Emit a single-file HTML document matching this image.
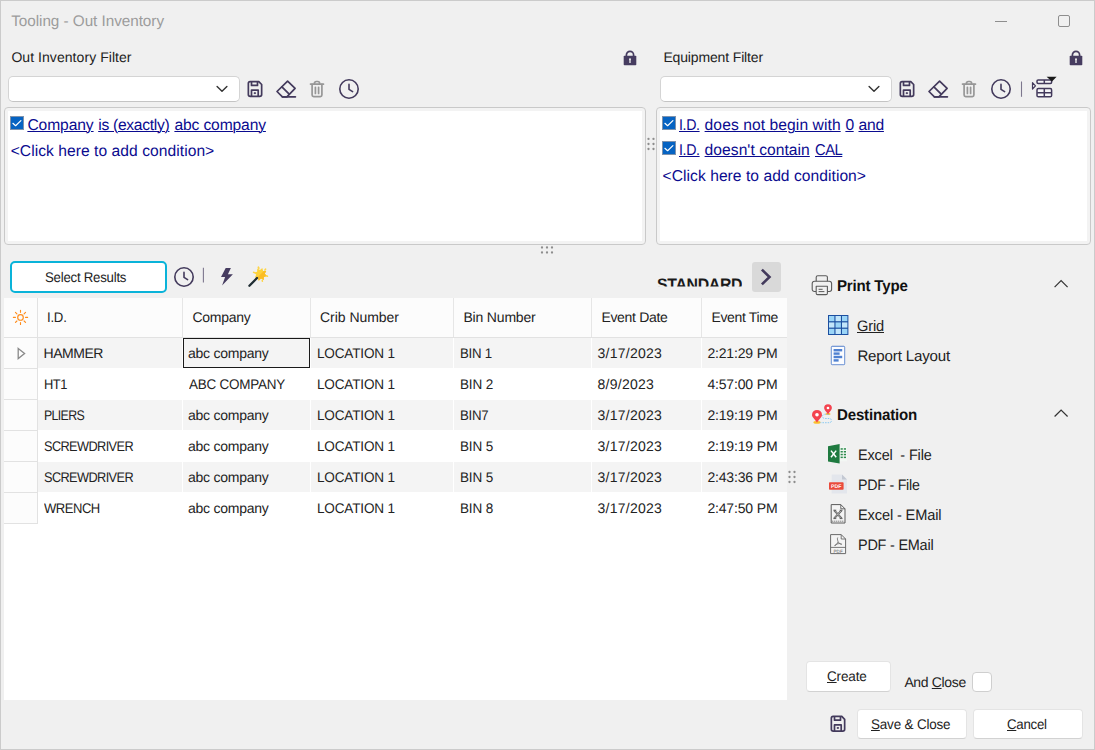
<!DOCTYPE html>
<html><head><meta charset="utf-8"><title>Tooling - Out Inventory</title>
<style>
html,body{margin:0;padding:0;}
body{width:1095px;height:750px;overflow:hidden;background:#f0f0f0;font-family:"Liberation Sans",sans-serif;font-size:14px;color:#222;position:relative;text-rendering:geometricPrecision;}
.abs{position:absolute;}
#win{position:absolute;left:0;top:0;width:1093px;height:748px;border:1px solid #cbcbcb;background:#f0f0f0;}
.t{position:absolute;white-space:pre;line-height:20px;}
.t u{text-decoration-thickness:1px;text-underline-offset:1px;}
.combo{position:absolute;height:24px;width:230px;background:#fff;border:1px solid #d4d4d4;border-bottom-color:#c4c4c4;border-radius:5px;}
.panel{position:absolute;background:#fff;border:1px solid #c9c9c9;border-radius:4px;box-shadow:inset 0 0 0 3px #f3f3f3;box-sizing:border-box;}
.cb{position:absolute;width:14px;height:14px;background:#0663c2;box-sizing:border-box;border:1px solid #7f93ad;}
.btn{position:absolute;background:#fff;border:1px solid #e4e4e4;border-bottom-color:#d2d2d2;border-radius:4px;box-sizing:border-box;}
.dot{position:absolute;width:2px;height:2px;background:#a8a8a8;border-radius:1px;}
#grid{position:absolute;left:4px;top:298px;width:783px;height:402px;background:#fff;}
.hdr{position:absolute;left:0;top:0;width:783px;height:39px;background:#fcfcfc;border-bottom:1px solid #e2e2e2;}
.vl{position:absolute;width:1px;}
.row{position:absolute;left:34px;width:749px;height:30px;}
.ind{position:absolute;left:0;width:33px;height:30px;background:#fcfcfc;border-right:1px solid #e2e2e2;border-bottom:1px solid #e2e2e2;}
svg{position:absolute;left:0;top:0;overflow:visible;}
</style></head><body>
<div id="win"></div>
<!-- window buttons -->
<div class="abs" style="left:995px;top:21px;width:12px;height:1px;background:#8e8e8e;"></div>
<div class="abs" style="left:1058px;top:15px;width:10px;height:10px;border:1px solid #8e8e8e;border-radius:2px;"></div>

<div class="combo" style="left:8px;top:76px;"></div>
<div class="combo" style="left:660px;top:76px;"></div>

<div class="panel" style="left:4px;top:107px;width:642px;height:138px;"></div>
<div class="panel" style="left:656px;top:107px;width:435px;height:138px;"></div>

<!-- condition checkboxes -->
<div class="cb" style="left:10px;top:116px;"></div>
<div class="cb" style="left:662px;top:116px;"></div>
<div class="cb" style="left:662px;top:141px;"></div>


<!-- Select results button -->
<div class="abs" style="left:10px;top:261px;width:157px;height:32px;box-sizing:border-box;border:2px solid #0ab3d9;border-radius:5px;background:#fff;"></div>
<div class="abs" style="left:752px;top:262px;width:29px;height:30px;background:#d9d9d9;border-radius:3px;"></div>

<!-- grid -->
<div id="grid">
  <div class="hdr"></div>
  <div class="row" style="top:40px;background:#f4f4f4;"></div>
  <div class="row" style="top:102px;background:#f4f4f4;"></div>
  <div class="row" style="top:164px;background:#f4f4f4;"></div>
  <div class="ind" style="top:40px;"></div>
  <div class="ind" style="top:71px;"></div>
  <div class="ind" style="top:102px;"></div>
  <div class="ind" style="top:133px;"></div>
  <div class="ind" style="top:164px;"></div>
  <div class="ind" style="top:195px;"></div>
  <!-- header dividers -->
  <div class="vl" style="left:33px;top:0;height:39px;background:#e2e2e2;"></div>
  <div class="vl" style="left:178px;top:0;height:39px;background:#e6e6e6;"></div>
  <div class="vl" style="left:306px;top:0;height:39px;background:#e6e6e6;"></div>
  <div class="vl" style="left:449px;top:0;height:39px;background:#e6e6e6;"></div>
  <div class="vl" style="left:587px;top:0;height:39px;background:#e6e6e6;"></div>
  <div class="vl" style="left:697px;top:0;height:39px;background:#e6e6e6;"></div>
  <!-- body dividers (white) -->
  <div class="vl" style="left:178px;top:40px;height:186px;background:#fff;"></div>
  <div class="vl" style="left:306px;top:40px;height:186px;background:#fff;"></div>
  <div class="vl" style="left:449px;top:40px;height:186px;background:#fff;"></div>
  <div class="vl" style="left:587px;top:40px;height:186px;background:#fff;"></div>
  <div class="vl" style="left:697px;top:40px;height:186px;background:#fff;"></div>
  <!-- focused cell -->
  <div class="abs" style="left:179px;top:40px;width:127px;height:30px;box-sizing:border-box;border:1px solid #1a1a1a;background:#f4f4f4;"></div>
</div>

<!-- buttons -->
<div class="btn" style="left:806px;top:661px;width:85px;height:31px;"></div>
<div class="btn" style="left:857px;top:709px;width:110px;height:30px;"></div>
<div class="btn" style="left:973px;top:709px;width:110px;height:30px;"></div>
<div class="abs" style="left:972px;top:672px;width:20px;height:20px;box-sizing:border-box;background:#fff;border:1px solid #cfcfcf;border-radius:4px;"></div>

<div class="t" style="left:11.2px;top:12px;font-size:15.3px;letter-spacing:-0.048px;color:#9c9c9c;">Tooling - Out Inventory</div>
<div class="t" style="left:11.4px;top:47px;font-size:14.0px;letter-spacing:0.058px;color:#222;">Out Inventory Filter</div>
<div class="t" style="left:663.4px;top:47px;font-size:14.0px;letter-spacing:-0.146px;color:#222;">Equipment Filter</div>
<div class="t" style="left:27.4px;top:116px;font-size:15.64px;letter-spacing:-0.096px;color:#0b0b8f;"><u>Company</u></div>
<div class="t" style="left:98.2px;top:116px;font-size:15.64px;letter-spacing:-0.281px;color:#0b0b8f;"><u>is (exactly)</u></div>
<div class="t" style="left:174.4px;top:116px;font-size:15.64px;letter-spacing:-0.131px;color:#0b0b8f;"><u>abc company</u></div>
<div class="t" style="left:10.7px;top:142px;font-size:15.64px;letter-spacing:0.042px;color:#0b0b8f;">&lt;Click here to add condition&gt;</div>
<div class="t" style="left:679.2px;top:116px;font-size:15.64px;letter-spacing:-0.406px;color:#0b0b8f;transform:scaleX(0.908);transform-origin:0 0;"><u>I.D.</u></div>
<div class="t" style="left:704.6px;top:116px;font-size:15.64px;letter-spacing:0.076px;color:#0b0b8f;"><u>does not begin with</u></div>
<div class="t" style="left:845.4px;top:116px;font-size:15.64px;letter-spacing:-0.403px;color:#0b0b8f;"><u>0</u></div>
<div class="t" style="left:858.5px;top:116px;font-size:15.64px;letter-spacing:-0.226px;color:#0b0b8f;"><u>and</u></div>
<div class="t" style="left:679.2px;top:141px;font-size:15.64px;letter-spacing:-0.406px;color:#0b0b8f;transform:scaleX(0.908);transform-origin:0 0;"><u>I.D.</u></div>
<div class="t" style="left:704.6px;top:141px;font-size:15.64px;letter-spacing:0.038px;color:#0b0b8f;"><u>doesn&#x27;t contain</u></div>
<div class="t" style="left:814.6px;top:141px;font-size:15.64px;letter-spacing:-0.444px;color:#0b0b8f;transform:scaleX(0.939);transform-origin:0 0;"><u>CAL</u></div>
<div class="t" style="left:662.6px;top:167px;font-size:15.64px;letter-spacing:0.035px;color:#0b0b8f;">&lt;Click here to add condition&gt;</div>
<div class="t" style="left:45.4px;top:267px;font-size:14.0px;letter-spacing:-0.248px;color:#222;transform:scaleX(0.944);transform-origin:0 0;">Select Results</div>
<div class="t" style="left:656.6px;top:275px;font-size:16.6px;letter-spacing:-0.344px;color:#1a1a1a;transform:scaleX(0.956);transform-origin:0 0;font-weight:bold;clip-path:inset(0 0 8.4px 0);">STANDARD</div>
<div class="t" style="left:47.4px;top:307px;font-size:14.0px;letter-spacing:-0.233px;color:#222;transform:scaleX(0.94);transform-origin:0 0;">I.D.</div>
<div class="t" style="left:192.4px;top:307px;font-size:14.0px;letter-spacing:-0.246px;color:#222;">Company</div>
<div class="t" style="left:320.0px;top:307px;font-size:14.0px;letter-spacing:-0.033px;color:#222;">Crib Number</div>
<div class="t" style="left:463.4px;top:307px;font-size:14.0px;letter-spacing:-0.172px;color:#222;">Bin Number</div>
<div class="t" style="left:601.4px;top:307px;font-size:14.0px;letter-spacing:-0.307px;color:#222;">Event Date</div>
<div class="t" style="left:711.4px;top:307px;font-size:14.0px;letter-spacing:-0.343px;color:#222;">Event Time</div>
<div class="t" style="left:43.6px;top:343px;font-size:14.0px;letter-spacing:-0.472px;color:#222;">HAMMER</div>
<div class="t" style="left:188.0px;top:343px;font-size:14.0px;letter-spacing:-0.244px;color:#222;">abc company</div>
<div class="t" style="left:316.6px;top:343px;font-size:14.0px;letter-spacing:-0.183px;color:#222;transform:scaleX(0.968);transform-origin:0 0;">LOCATION 1</div>
<div class="t" style="left:459.6px;top:343px;font-size:14.0px;letter-spacing:-0.273px;color:#222;transform:scaleX(0.945);transform-origin:0 0;">BIN 1</div>
<div class="t" style="left:597.6px;top:343px;font-size:14.0px;letter-spacing:0.234px;color:#222;">3/17/2023</div>
<div class="t" style="left:707.4px;top:343px;font-size:14.0px;letter-spacing:-0.161px;color:#222;">2:21:29 PM</div>
<div class="t" style="left:43.6px;top:374px;font-size:14.0px;letter-spacing:-0.512px;color:#222;transform:scaleX(0.919);transform-origin:0 0;">HT1</div>
<div class="t" style="left:189.0px;top:374px;font-size:14.0px;letter-spacing:-0.240px;color:#222;transform:scaleX(0.962);transform-origin:0 0;">ABC COMPANY</div>
<div class="t" style="left:316.6px;top:374px;font-size:14.0px;letter-spacing:-0.183px;color:#222;transform:scaleX(0.968);transform-origin:0 0;">LOCATION 1</div>
<div class="t" style="left:459.6px;top:374px;font-size:14.0px;letter-spacing:-0.164px;color:#222;transform:scaleX(0.965);transform-origin:0 0;">BIN 2</div>
<div class="t" style="left:597.6px;top:374px;font-size:14.0px;letter-spacing:0.237px;color:#222;">8/9/2023</div>
<div class="t" style="left:707.4px;top:374px;font-size:14.0px;letter-spacing:-0.161px;color:#222;">4:57:00 PM</div>
<div class="t" style="left:43.6px;top:405px;font-size:14.0px;letter-spacing:-0.744px;color:#222;transform:scaleX(0.882);transform-origin:0 0;">PLIERS</div>
<div class="t" style="left:188.0px;top:405px;font-size:14.0px;letter-spacing:-0.244px;color:#222;">abc company</div>
<div class="t" style="left:316.6px;top:405px;font-size:14.0px;letter-spacing:-0.183px;color:#222;transform:scaleX(0.968);transform-origin:0 0;">LOCATION 1</div>
<div class="t" style="left:459.6px;top:405px;font-size:14.0px;letter-spacing:-0.284px;color:#222;transform:scaleX(0.947);transform-origin:0 0;">BIN7</div>
<div class="t" style="left:597.6px;top:405px;font-size:14.0px;letter-spacing:0.234px;color:#222;">3/17/2023</div>
<div class="t" style="left:707.4px;top:405px;font-size:14.0px;letter-spacing:-0.161px;color:#222;">2:19:19 PM</div>
<div class="t" style="left:43.6px;top:436px;font-size:14.0px;letter-spacing:-0.636px;color:#222;transform:scaleX(0.908);transform-origin:0 0;">SCREWDRIVER</div>
<div class="t" style="left:188.0px;top:436px;font-size:14.0px;letter-spacing:-0.244px;color:#222;">abc company</div>
<div class="t" style="left:316.6px;top:436px;font-size:14.0px;letter-spacing:-0.183px;color:#222;transform:scaleX(0.968);transform-origin:0 0;">LOCATION 1</div>
<div class="t" style="left:459.6px;top:436px;font-size:14.0px;letter-spacing:-0.164px;color:#222;transform:scaleX(0.965);transform-origin:0 0;">BIN 5</div>
<div class="t" style="left:597.6px;top:436px;font-size:14.0px;letter-spacing:0.234px;color:#222;">3/17/2023</div>
<div class="t" style="left:707.4px;top:436px;font-size:14.0px;letter-spacing:-0.161px;color:#222;">2:19:19 PM</div>
<div class="t" style="left:43.6px;top:467px;font-size:14.0px;letter-spacing:-0.636px;color:#222;transform:scaleX(0.908);transform-origin:0 0;">SCREWDRIVER</div>
<div class="t" style="left:188.0px;top:467px;font-size:14.0px;letter-spacing:-0.244px;color:#222;">abc company</div>
<div class="t" style="left:316.6px;top:467px;font-size:14.0px;letter-spacing:-0.183px;color:#222;transform:scaleX(0.968);transform-origin:0 0;">LOCATION 1</div>
<div class="t" style="left:459.6px;top:467px;font-size:14.0px;letter-spacing:-0.164px;color:#222;transform:scaleX(0.965);transform-origin:0 0;">BIN 5</div>
<div class="t" style="left:597.6px;top:467px;font-size:14.0px;letter-spacing:0.234px;color:#222;">3/17/2023</div>
<div class="t" style="left:707.4px;top:467px;font-size:14.0px;letter-spacing:-0.161px;color:#222;">2:43:36 PM</div>
<div class="t" style="left:43.6px;top:498px;font-size:14.0px;letter-spacing:-0.511px;color:#222;transform:scaleX(0.931);transform-origin:0 0;">WRENCH</div>
<div class="t" style="left:188.0px;top:498px;font-size:14.0px;letter-spacing:-0.244px;color:#222;">abc company</div>
<div class="t" style="left:316.6px;top:498px;font-size:14.0px;letter-spacing:-0.183px;color:#222;transform:scaleX(0.968);transform-origin:0 0;">LOCATION 1</div>
<div class="t" style="left:459.6px;top:498px;font-size:14.0px;letter-spacing:-0.164px;color:#222;transform:scaleX(0.965);transform-origin:0 0;">BIN 8</div>
<div class="t" style="left:597.6px;top:498px;font-size:14.0px;letter-spacing:0.234px;color:#222;">3/17/2023</div>
<div class="t" style="left:707.4px;top:498px;font-size:14.0px;letter-spacing:-0.161px;color:#222;">2:47:50 PM</div>
<div class="t" style="left:837.4px;top:277px;font-size:15.7px;letter-spacing:-0.208px;color:#111;transform:scaleX(0.961);transform-origin:0 0;font-weight:bold;">Print Type</div>
<div class="t" style="left:857.4px;top:317px;font-size:15.1px;letter-spacing:-0.156px;color:#222;transform:scaleX(0.968);transform-origin:0 0;"><u>Grid</u></div>
<div class="t" style="left:857.4px;top:347px;font-size:15.1px;letter-spacing:-0.171px;color:#222;">Report Layout</div>
<div class="t" style="left:837.4px;top:406px;font-size:15.7px;letter-spacing:-0.206px;color:#111;transform:scaleX(0.962);transform-origin:0 0;font-weight:bold;">Destination</div>
<div class="t" style="left:858.0px;top:446px;font-size:15.1px;letter-spacing:-0.167px;color:#222;transform:scaleX(0.96);transform-origin:0 0;">Excel  - File</div>
<div class="t" style="left:858.0px;top:476px;font-size:15.1px;letter-spacing:-0.267px;color:#222;transform:scaleX(0.944);transform-origin:0 0;">PDF - File</div>
<div class="t" style="left:858.0px;top:506px;font-size:15.1px;letter-spacing:-0.148px;color:#222;transform:scaleX(0.968);transform-origin:0 0;">Excel - EMail</div>
<div class="t" style="left:858.0px;top:536px;font-size:15.1px;letter-spacing:-0.225px;color:#222;transform:scaleX(0.956);transform-origin:0 0;">PDF - EMail</div>
<div class="t" style="left:827.4px;top:666px;font-size:14.0px;letter-spacing:-0.166px;color:#222;transform:scaleX(0.965);transform-origin:0 0;"><u>C</u>reate</div>
<div class="t" style="left:904.4px;top:672px;font-size:14.0px;letter-spacing:-0.355px;color:#222;">And <u>C</u>lose</div>
<div class="t" style="left:871.0px;top:714px;font-size:14.0px;letter-spacing:-0.191px;color:#222;transform:scaleX(0.962);transform-origin:0 0;"><u>S</u>ave &amp; Close</div>
<div class="t" style="left:1007.0px;top:714px;font-size:14.0px;letter-spacing:-0.271px;color:#222;transform:scaleX(0.946);transform-origin:0 0;"><u>C</u>ancel</div>

<svg width="1095" height="750" viewBox="0 0 1095 750">
<g transform="translate(247.5,80.8)" fill="none" stroke="#433a5c" stroke-width="1.7" stroke-linejoin="round">
<path d="M2.6 0.85 H11.3 L14.15 3.7 V13.6 a1.9 1.9 0 0 1 -1.9 1.9 H2.75 a1.9 1.9 0 0 1 -1.9 -1.9 V2.6 a1.75 1.75 0 0 1 1.75 -1.75 Z"/>
<path d="M4 1 V4.6 H10 V1"/>
<path d="M4 15.3 V9.3 H10.7 V15.3"/>
<rect x="6.6" y="11.9" width="1.5" height="0.9" fill="#433a5c" stroke-width="0.8"/>
</g>
<g transform="translate(276.1,80.2)" fill="none" stroke="#433a5c" stroke-width="1.7" stroke-linejoin="round" stroke-linecap="round">
<path d="M11.5 0.9 L19 8.2 L10.8 16.6 H6.3 L0.9 11.3 Z"/>
<path d="M5.8 6.6 L12.6 13.4"/>
<path d="M6.3 16.6 H19.3"/>
</g>
<g transform="translate(309.8,80.7)" fill="none" stroke="#979797" stroke-width="1.7" stroke-linecap="round" stroke-linejoin="round">
<path d="M0.7 3.4 H13.7"/>
<path d="M4.6 3.2 V2.6 a1.8 1.8 0 0 1 1.8 -1.8 h1.6 a1.8 1.8 0 0 1 1.8 1.8 V3.2"/>
<path d="M2.3 3.6 V14.3 a1.6 1.6 0 0 0 1.6 1.6 H10.5 a1.6 1.6 0 0 0 1.6 -1.6 V3.6"/>
<path d="M5.6 6.6 V12.8 M8.8 6.6 V12.8"/>
</g>
<g fill="none" stroke="#433a5c" stroke-width="1.6" stroke-linecap="round" stroke-linejoin="round">
<circle cx="349" cy="89" r="9.2"/>
<path d="M349 84.4 V89.3 L352.6 91.6"/>
</g>
<g transform="translate(899.5,80.8)" fill="none" stroke="#433a5c" stroke-width="1.7" stroke-linejoin="round">
<path d="M2.6 0.85 H11.3 L14.15 3.7 V13.6 a1.9 1.9 0 0 1 -1.9 1.9 H2.75 a1.9 1.9 0 0 1 -1.9 -1.9 V2.6 a1.75 1.75 0 0 1 1.75 -1.75 Z"/>
<path d="M4 1 V4.6 H10 V1"/>
<path d="M4 15.3 V9.3 H10.7 V15.3"/>
<rect x="6.6" y="11.9" width="1.5" height="0.9" fill="#433a5c" stroke-width="0.8"/>
</g>
<g transform="translate(928.1,80.2)" fill="none" stroke="#433a5c" stroke-width="1.7" stroke-linejoin="round" stroke-linecap="round">
<path d="M11.5 0.9 L19 8.2 L10.8 16.6 H6.3 L0.9 11.3 Z"/>
<path d="M5.8 6.6 L12.6 13.4"/>
<path d="M6.3 16.6 H19.3"/>
</g>
<g transform="translate(961.8,80.7)" fill="none" stroke="#979797" stroke-width="1.7" stroke-linecap="round" stroke-linejoin="round">
<path d="M0.7 3.4 H13.7"/>
<path d="M4.6 3.2 V2.6 a1.8 1.8 0 0 1 1.8 -1.8 h1.6 a1.8 1.8 0 0 1 1.8 1.8 V3.2"/>
<path d="M2.3 3.6 V14.3 a1.6 1.6 0 0 0 1.6 1.6 H10.5 a1.6 1.6 0 0 0 1.6 -1.6 V3.6"/>
<path d="M5.6 6.6 V12.8 M8.8 6.6 V12.8"/>
</g>
<g fill="none" stroke="#433a5c" stroke-width="1.6" stroke-linecap="round" stroke-linejoin="round">
<circle cx="1001" cy="89" r="9.2"/>
<path d="M1001 84.4 V89.3 L1004.6 91.6"/>
</g>
<path d="M1021.5 81.5 V96.8" stroke="#7d778e" stroke-width="1.1"/>
<g fill="#f6f6f8" stroke="#433a5c" stroke-width="1.5" stroke-linejoin="round">
<rect x="1037" y="79.9" width="14.6" height="3.6" rx="1.2"/>
<path d="M1044.3 80 V83.4" />
<rect x="1037" y="88.6" width="14.6" height="8.2" rx="1.4"/>
<path d="M1044.3 88.8 V96.6 M1037.2 92.7 H1051.4"/>
<path d="M1032.5 82.6 L1035.5 85.8 L1032.5 89 Z" fill="none" stroke-width="1.2"/>
</g>
<path d="M1046.6 76.8 H1056.6 L1052 81.6 Z" fill="#1a1a1a"/>
<g transform="translate(623.7,50.5)">
<path d="M2.7 5.6 V4.4 a3.6 3.6 0 0 1 7.2 0 V5.6" fill="none" stroke="#463c60" stroke-width="1.7"/>
<rect x="0" y="5.2" width="12.6" height="9.6" rx="0.8" fill="#463c60"/>
<circle cx="6.3" cy="8.7" r="1" fill="#f0f0f0"/>
<rect x="5.65" y="9.2" width="1.3" height="3.3" fill="#f0f0f0"/>
</g>
<g transform="translate(1069.7,50.5)">
<path d="M2.7 5.6 V4.4 a3.6 3.6 0 0 1 7.2 0 V5.6" fill="none" stroke="#463c60" stroke-width="1.7"/>
<rect x="0" y="5.2" width="12.6" height="9.6" rx="0.8" fill="#463c60"/>
<circle cx="6.3" cy="8.7" r="1" fill="#f0f0f0"/>
<rect x="5.65" y="9.2" width="1.3" height="3.3" fill="#f0f0f0"/>
</g>
<path d="M217.1 86.4 l4.9 4.9 l4.9 -4.9" fill="none" stroke="#333" stroke-width="1.4" stroke-linecap="round" stroke-linejoin="round"/>
<path d="M869.1 86.4 l4.9 4.9 l4.9 -4.9" fill="none" stroke="#333" stroke-width="1.4" stroke-linecap="round" stroke-linejoin="round"/>
<path d="M12.9 123.3 L15.6 125.7 L20.9 120.6" fill="none" stroke="#fff" stroke-width="1.2" stroke-linecap="round" stroke-linejoin="round"/>
<path d="M664.9 123.3 L667.6 125.7 L672.9 120.6" fill="none" stroke="#fff" stroke-width="1.2" stroke-linecap="round" stroke-linejoin="round"/>
<path d="M664.9 148.3 L667.6 150.7 L672.9 145.6" fill="none" stroke="#fff" stroke-width="1.2" stroke-linecap="round" stroke-linejoin="round"/>
<g fill="none" stroke="#433a5c" stroke-width="1.6" stroke-linecap="round" stroke-linejoin="round">
<circle cx="184" cy="277" r="9.2"/>
<path d="M184 272.4 V277.3 L187.6 279.6"/>
</g>
<path d="M203.4 267.8 V282.4" stroke="#7d778e" stroke-width="1.1"/>
<path d="M225.7 268 H230.9 L227.9 274.2 H232.9 L222.1 285.4 L225.1 276.9 H221 Z" fill="#463c60"/>
<polygon points="262.3,267.9 263.1,270.9 266.2,271.1 264.8,273.8 266.9,276.1 263.9,276.9 263.7,280.0 261.0,278.6 258.7,280.7 257.9,277.7 254.8,277.5 256.2,274.8 254.1,272.5 257.1,271.7 257.3,268.6 260.0,270.0" fill="#fdd23b"/>
<clipPath id="wc"><path d="M252.5 282.3 L268.5 266.3 L270.5 284.3 Z"/></clipPath>
<polygon points="262.3,267.9 263.1,270.9 266.2,271.1 264.8,273.8 266.9,276.1 263.9,276.9 263.7,280.0 261.0,278.6 258.7,280.7 257.9,277.7 254.8,277.5 256.2,274.8 254.1,272.5 257.1,271.7 257.3,268.6 260.0,270.0" fill="#fbbd25" clip-path="url(#wc)"/>
<path d="M249.4 285.7 L257.0 278.0" stroke="#1f2d33" stroke-width="2.3" stroke-linecap="round"/>
<g fill="#fdd445"><ellipse cx="258.6" cy="267.7" rx="0.9" ry="1.4" transform="rotate(-30 258.6 267.7)"/><ellipse cx="265.3" cy="269.6" rx="0.9" ry="1.4" transform="rotate(35 265.3 269.6)"/><ellipse cx="254.1" cy="272.5" rx="1.4" ry="0.8" transform="rotate(20 254.1 272.5)"/><ellipse cx="267" cy="276" rx="1.4" ry="0.8" transform="rotate(35 267 276)"/><ellipse cx="262.3" cy="280.8" rx="0.8" ry="1.3" transform="rotate(-10 262.3 280.8)"/></g>
<path d="M761.9 269.6 L769.5 277 L761.9 284.4" fill="none" stroke="#433a5c" stroke-width="2.6" stroke-linecap="butt" stroke-linejoin="miter"/>
<g fill="none" stroke="#ff8c1a" stroke-width="1.15" stroke-linecap="round"><circle cx="20.5" cy="317.4" r="2.8"/><path d="M25.60 317.40 L27.60 317.40 M24.11 321.01 L25.52 322.42 M20.50 322.50 L20.50 324.50 M16.89 321.01 L15.48 322.42 M15.40 317.40 L13.40 317.40 M16.89 313.79 L15.48 312.38 M20.50 312.30 L20.50 310.30 M24.11 313.79 L25.52 312.38 "/></g>
<path d="M18.2 348.4 L24.6 353.5 L18.2 358.6 Z" fill="none" stroke="#8a8a8a" stroke-width="1.3" stroke-linejoin="miter"/>
<path d="M1054.6 287.2 l6.5 -6.5 l6.5 6.5" fill="none" stroke="#333" stroke-width="1.2" stroke-linecap="butt" stroke-linejoin="miter"/>
<path d="M1054.6 416.5 l6.5 -6.5 l6.5 6.5" fill="none" stroke="#333" stroke-width="1.2" stroke-linecap="butt" stroke-linejoin="miter"/>
<g fill="none" stroke="#5a5a5a" stroke-width="1.1" stroke-linejoin="round">
<path d="M816.2 281.2 V277.3 a1.6 1.6 0 0 1 1.6 -1.6 H825.8 a1.6 1.6 0 0 1 1.6 1.6 V281.2"/>
<path d="M816.2 291.5 H814.4 a2.2 2.2 0 0 1 -2.2 -2.2 V283.6 a2.4 2.4 0 0 1 2.4 -2.4 H829.2 a2.4 2.4 0 0 1 2.4 2.4 V289.3 a2.2 2.2 0 0 1 -2.2 2.2 H827.4"/>
<path d="M816.2 286.3 H827.4 V293.2 a1.4 1.4 0 0 1 -1.4 1.4 H817.6 a1.4 1.4 0 0 1 -1.4 -1.4 Z" fill="#f0f0f0"/>
<path d="M818.6 289.3 H822.6 M818.6 291.6 H824.4" stroke-width="1"/>
</g>
<rect x="828" y="315" width="20.4" height="20" fill="#1c4fa0"/><rect x="829.0" y="316.0" width="5.4" height="5.2" fill="#9bd5f7"/><rect x="835.5" y="316.0" width="5.4" height="5.2" fill="#c2e6fb"/><rect x="842.0" y="316.0" width="5.4" height="5.2" fill="#9bd5f7"/><rect x="829.0" y="322.4" width="5.4" height="5.2" fill="#c2e6fb"/><rect x="835.5" y="322.4" width="5.4" height="5.2" fill="#9bd5f7"/><rect x="842.0" y="322.4" width="5.4" height="5.2" fill="#c2e6fb"/><rect x="829.0" y="328.8" width="5.4" height="5.2" fill="#9bd5f7"/><rect x="835.5" y="328.8" width="5.4" height="5.2" fill="#c2e6fb"/><rect x="842.0" y="328.8" width="5.4" height="5.2" fill="#9bd5f7"/>
<rect x="831.3" y="346.3" width="13.4" height="18.4" rx="0.8" fill="#fbfcff" stroke="#5b86cf" stroke-width="0.9"/>
<path d="M833 345.8 V347 M835 345.8 V347 M837 345.8 V347 M839 345.8 V347 M841 345.8 V347 M843 345.8 V347" stroke="#5b86cf" stroke-width="0.7"/>
<g fill="#4f81d1"><rect x="833.6" y="349" width="8.6" height="2.4"/><rect x="833.6" y="352.4" width="6" height="2.4"/><rect x="833.6" y="355.8" width="8.6" height="2.4"/><rect x="833.6" y="359.2" width="5" height="2.4"/></g>
<ellipse cx="817" cy="422.4" rx="3.6" ry="1.3" fill="#fbc02d"/>
<ellipse cx="828" cy="414" rx="2.6" ry="1" fill="#fbc02d"/>
<path d="M828.5 414.3 H824.6 a2.1 2.1 0 0 0 0 4.2 H829.4 a2.1 2.1 0 0 1 0 4.2 H820.5" fill="none" stroke="#7cc4f0" stroke-width="0.9" stroke-dasharray="1.5 1.1"/>
<path d="M817 422.4 C814.4 418.6 812 417 812 414.9 a5 5 0 0 1 10 0 C822 417 819.6 418.6 817 422.4 Z" fill="#f4434f"/>
<circle cx="817" cy="414.8" r="1.8" fill="#fff"/>
<path d="M828 414.2 C826 411.2 824.1 410 824.1 408.1 a3.9 3.9 0 0 1 7.8 0 C831.9 410 830 411.2 828 414.2 Z" fill="#f4434f"/>
<circle cx="828" cy="408" r="1.35" fill="#fff"/>
<rect x="837" y="446.6" width="10" height="14.6" fill="#f3f7f4" />
<g fill="#2e8b4e"><rect x="840.6" y="448.2" width="2.2" height="1.5"/><rect x="843.8" y="448.2" width="2.2" height="1.5"/><rect x="840.6" y="451" width="2.2" height="1.5"/><rect x="843.8" y="451" width="2.2" height="1.5"/><rect x="840.6" y="453.8" width="2.2" height="1.5"/><rect x="843.8" y="453.8" width="2.2" height="1.5"/><rect x="840.6" y="456.6" width="2.2" height="1.5"/><rect x="843.8" y="456.6" width="2.2" height="1.5"/></g>
<path d="M828 446.2 L839.6 444 V463.6 L828 461.4 Z" fill="#1f7a40"/>
<path d="M831 450.6 L836.2 457.2 M836.2 450.6 L831 457.2" stroke="#fff" stroke-width="1.5"/>
<path d="M831.6 474.4 H842 L847 479.4 V493.4 H831.6 Z" fill="#e3e6ec"/>
<path d="M842 474.4 L847 479.4 H842 Z" fill="#c3c8d2"/>
<rect x="829" y="482.2" width="14.6" height="7.6" rx="0.8" fill="#ea4b3c"/>
<text x="836.3" y="488" font-family="Liberation Sans, sans-serif" font-size="5.2" font-weight="bold" fill="#fff" text-anchor="middle">PDF</text>
<path d="M831.2 504.6 H840.8 L845 508.8 V523 H831.2 Z" fill="#f4f4f4" stroke="#5a5a5a" stroke-width="1" stroke-linejoin="round"/>
<path d="M840.8 504.6 V508.8 H845" fill="none" stroke="#5a5a5a" stroke-width="0.9"/>
<path d="M834.2 510.4 L841.6 518.4 M841.6 510.4 L834.2 518.4" stroke="#4e4e4e" stroke-width="1.9"/>
<path d="M834.2 510.4 L841.6 518.4 M841.6 510.4 L834.2 518.4" stroke="#f4f4f4" stroke-width="0.6"/>
<path d="M833.3 510.2 H836.3 M839.6 510.2 H842.6 M833.3 518.6 H836.3 M839.6 518.6 H842.6" stroke="#4e4e4e" stroke-width="0.8"/>
<path d="M832 521.2 H844.2" stroke="#777" stroke-width="0.9" stroke-dasharray="1.4 0.6"/>
<path d="M830.6 534.6 H841.2 L845.6 539 V553.6 H830.6 Z" fill="#f4f4f4" stroke="#6a6a6a" stroke-width="1" stroke-linejoin="round"/>
<path d="M841.2 534.6 V539 H845.6" fill="none" stroke="#6a6a6a" stroke-width="0.9"/>
<path d="M830.6 547.4 H845.6" stroke="#6a6a6a" stroke-width="0.9"/>
<path d="M838 537.6 c-0.9 0 -0.7 2.2 0.1 4 c-0.6 1.8 -1.9 3.7 -3.2 4.2 c-0.8 -0.6 0.9 -1.6 3 -2 c1.6 -0.4 3.6 -0.3 3.9 0.4 c-0.1 0.7 -2 0.1 -3.7 -2.4" fill="none" stroke="#6a6a6a" stroke-width="0.8"/>
<text x="838.1" y="552.6" font-family="Liberation Sans, sans-serif" font-size="4.6" fill="#6a6a6a" text-anchor="middle">PDF</text>
<g fill="#8d8d8d"><circle cx="648.5" cy="138.9" r="1.15"/><circle cx="648.5" cy="144" r="1.15"/><circle cx="648.5" cy="149" r="1.15"/><circle cx="653.5" cy="138.9" r="1.15"/><circle cx="653.5" cy="144" r="1.15"/><circle cx="653.5" cy="149" r="1.15"/><circle cx="542" cy="247.5" r="1.15"/><circle cx="542" cy="252.5" r="1.15"/><circle cx="547" cy="247.5" r="1.15"/><circle cx="547" cy="252.5" r="1.15"/><circle cx="552" cy="247.5" r="1.15"/><circle cx="552" cy="252.5" r="1.15"/><circle cx="789.5" cy="472" r="1.15"/><circle cx="789.5" cy="477" r="1.15"/><circle cx="789.5" cy="482" r="1.15"/><circle cx="794.5" cy="472" r="1.15"/><circle cx="794.5" cy="477" r="1.15"/><circle cx="794.5" cy="482" r="1.15"/></g>
<g transform="translate(830.5,715.6)" fill="none" stroke="#433a5c" stroke-width="1.7" stroke-linejoin="round">
<path d="M2.6 0.85 H11.3 L14.15 3.7 V13.6 a1.9 1.9 0 0 1 -1.9 1.9 H2.75 a1.9 1.9 0 0 1 -1.9 -1.9 V2.6 a1.75 1.75 0 0 1 1.75 -1.75 Z"/>
<path d="M4 1 V4.6 H10 V1"/>
<path d="M4 15.3 V9.3 H10.7 V15.3"/>
<rect x="6.6" y="11.9" width="1.5" height="0.9" fill="#433a5c" stroke-width="0.8"/>
</g>
</svg>
</body></html>
